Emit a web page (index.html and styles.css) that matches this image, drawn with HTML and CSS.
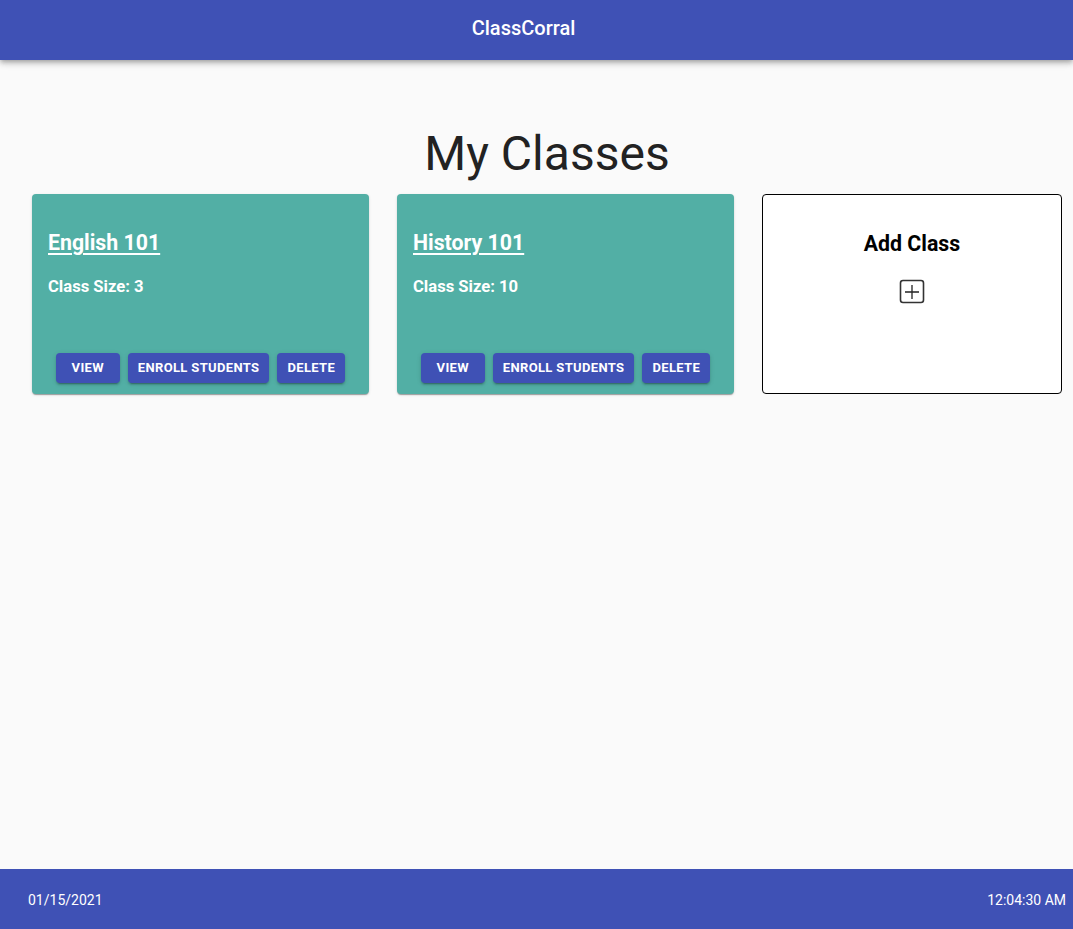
FILE: index.html
```html
<!DOCTYPE html>
<html>
<head>
<meta charset="utf-8">
<link rel="stylesheet" href="styles.css">
</head>
<body>
<header class="appbar"><span class="brand">ClassCorral</span></header>
<main class="main">
  <h1 class="page-title">My Classes</h1>
  <div class="cards">
    <div class="card class-card">
      <div class="card-body">
        <a class="class-name" href="#">English 101</a>
        <div class="class-size">Class Size: 3</div>
      </div>
      <div class="card-actions">
        <button class="btn">View</button>
        <button class="btn">Enroll Students</button>
        <button class="btn">Delete</button>
      </div>
    </div>
    <div class="card class-card">
      <div class="card-body">
        <a class="class-name" href="#">History 101</a>
        <div class="class-size">Class Size: 10</div>
      </div>
      <div class="card-actions">
        <button class="btn">View</button>
        <button class="btn">Enroll Students</button>
        <button class="btn">Delete</button>
      </div>
    </div>
    <div class="card add-card">
      <div class="add-title">Add Class</div>
      <svg class="add-icon" width="26" height="26" viewBox="0 0 26 26">
        <rect x="1.5" y="1.5" width="23" height="22" rx="2.5" fill="none" stroke="#333" stroke-width="1.6"/>
        <path d="M13 6v14M6 13h14" stroke="#222" stroke-width="1.3" fill="none"/>
      </svg>
    </div>
  </div>
</main>
<footer class="footer">
  <span>01/15/2021</span>
  <span>12:04:30 AM</span>
</footer>
</body>
</html>
```

FILE: styles.css
```css
* { box-sizing: border-box; }
html, body { margin: 0; padding: 0; height: 100%; }
body {
  background: #fafafa;
  font-family: Roboto, "Liberation Sans", sans-serif;
  color: rgba(0,0,0,0.87);
  display: flex;
  flex-direction: column;
  min-height: 929px;
}
.appbar {
  height: 60px;
  background: #3f51b5;
  color: #fff;
  display: flex;
  align-items: center;
  justify-content: center;
  padding: 0 26px 4px 0;
  box-shadow: 0 2px 4px -1px rgba(0,0,0,0.2), 0 4px 5px 0 rgba(0,0,0,0.14), 0 1px 10px 0 rgba(0,0,0,0.12);
  position: relative;
  z-index: 2;
  flex-shrink: 0;
}
.brand { font-size: 20px; font-weight: 500; }
.main { flex: 1; }
.page-title {
  margin: 66px 0 12px;
  padding-left: 21px;
  text-align: center;
  font-size: 48px;
  font-weight: 400;
  line-height: 56px;
  color: #222;
}
.cards {
  display: flex;
  gap: 28px;
  padding-left: 32px;
}
.card {
  height: 200px;
  border-radius: 4px;
}
.class-card {
  width: 337px;
  background: #52afa5;
  color: #fff;
  display: flex;
  flex-direction: column;
  justify-content: space-between;
  box-shadow: 0 2px 1px -1px rgba(0,0,0,0.2), 0 1px 1px 0 rgba(0,0,0,0.14), 0 1px 3px 0 rgba(0,0,0,0.12);
}
.card-body { padding: 35px 16px 0; }
.class-name {
  color: #fff;
  font-size: 21.3px;
  font-weight: 700;
  text-decoration: underline;
  text-underline-offset: 3px;
  line-height: 28px;
  display: inline-block;
}
.class-size {
  margin-top: 20px;
  font-size: 16.6px;
  font-weight: 700;
  line-height: 20px;
}
.card-actions {
  display: flex;
  justify-content: center;
  gap: 8px;
  padding-bottom: 11px;
}
.btn {
  height: 30px;
  padding: 0 10px 2px;
  background: #3f51b5;
  color: #fff;
  border: 0;
  border-radius: 4px;
  font-family: Roboto, "Liberation Sans", sans-serif;
  font-size: 13px;
  font-weight: 700;
  letter-spacing: 0.35px;
  text-transform: uppercase;
  min-width: 64px;
  box-shadow: 0 3px 1px -2px rgba(0,0,0,0.2), 0 2px 2px 0 rgba(0,0,0,0.14), 0 1px 5px 0 rgba(0,0,0,0.12);
}
.add-card {
  width: 300px;
  background: #fff;
  border: 1px solid #000;
  display: flex;
  flex-direction: column;
  align-items: center;
  padding-top: 37px;
}
.add-title {
  font-size: 21.3px;
  font-weight: 700;
  color: #000;
  line-height: 24px;
}
.add-icon { margin-top: 23px; }
.footer {
  height: 60px;
  background: #3f51b5;
  color: #fff;
  display: flex;
  align-items: center;
  justify-content: space-between;
  padding: 2px 7px 0 28px;
  font-size: 14px;
  flex-shrink: 0;
}
```
